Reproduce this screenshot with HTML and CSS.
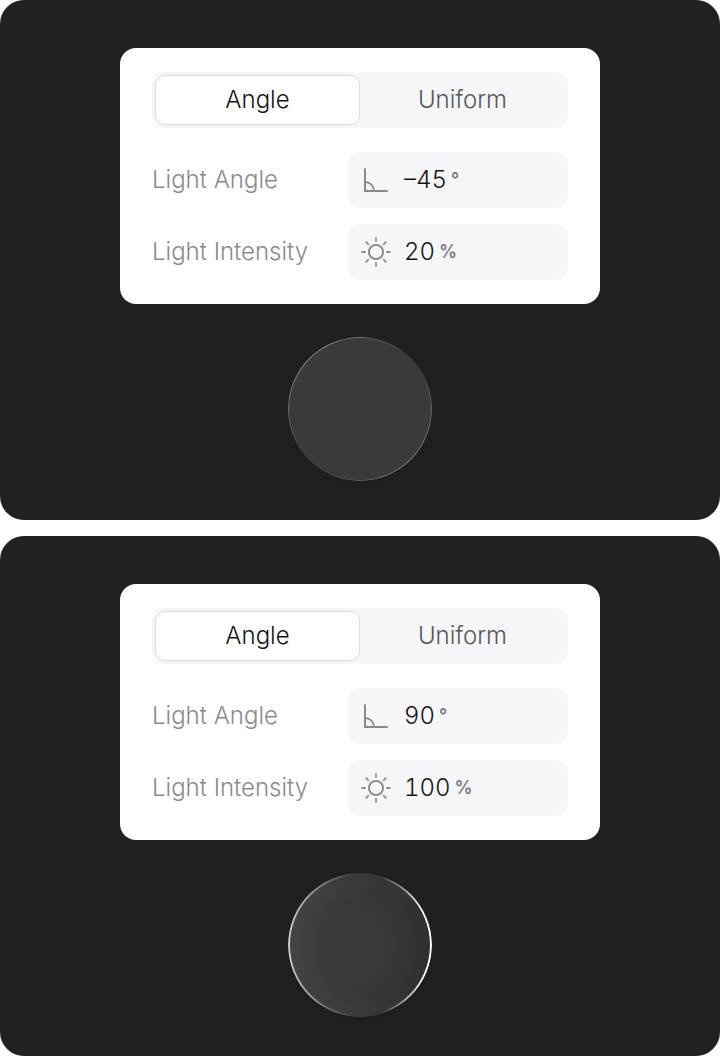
FILE: index.html
```html
<!doctype html>
<html lang="en">
  <head>
    <meta charset="utf-8">
    <title>Light settings</title>
    <meta name="viewport" content="width=device-width, initial-scale=1">
    <link rel="stylesheet" href="styles.css">
  </head>
  <body>
    <!-- shared icons -->
    <svg class="sprite" width="0" height="0" aria-hidden="true">
      <symbol id="icon-angle" viewBox="0 0 32 32">
        <path d="M5 5V27H27" stroke-width="2"/>
        <path d="M5 18A9 9 0 0 1 14 27" stroke-width="1.9"/>
      </symbol>
      <symbol id="icon-sun" viewBox="0 0 32 32">
        <circle cx="16" cy="16" r="7.1" stroke-width="1.9"/>
        <path d="M16 2.2V5M16 27V29.8M2.2 16H5M27 16H29.8M6.2 6.2L8.2 8.2M23.8 23.8L25.8 25.8M6.2 25.8L8.2 23.8M23.8 8.2L25.8 6.2" stroke-width="1.8"/>
      </symbol>
    </svg>

    <section class="stage">
      <form class="panel">
        <div class="segmented">
          <input type="radio" name="mode" id="mode_angle_1" checked>
          <label for="mode_angle_1">Angle</label>
          <input type="radio" name="mode" id="mode_uniform_1">
          <label for="mode_uniform_1">Uniform</label>
        </div>
        <div class="rows">
          <div class="row">
            <label for="angle_1">Light Angle</label>
            <div class="field">
              <svg class="icon"><use href="#icon-angle"/></svg>
              <input type="text" id="angle_1" value="–45">
              <span class="unit">°</span>
            </div>
          </div>
          <div class="row">
            <label for="intensity_1">Light Intensity</label>
            <div class="field">
              <svg class="icon"><use href="#icon-sun"/></svg>
              <input type="text" id="intensity_1" value="20">
              <span class="unit">%</span>
            </div>
          </div>
        </div>
      </form>
      <div class="knob knob-soft"></div>
    </section>

    <section class="stage">
      <form class="panel">
        <div class="segmented">
          <input type="radio" name="mode" id="mode_angle_2" checked>
          <label for="mode_angle_2">Angle</label>
          <input type="radio" name="mode" id="mode_uniform_2">
          <label for="mode_uniform_2">Uniform</label>
        </div>
        <div class="rows">
          <div class="row">
            <label for="angle_2">Light Angle</label>
            <div class="field">
              <svg class="icon"><use href="#icon-angle"/></svg>
              <input type="text" id="angle_2" value="90">
              <span class="unit">°</span>
            </div>
          </div>
          <div class="row">
            <label for="intensity_2">Light Intensity</label>
            <div class="field">
              <svg class="icon"><use href="#icon-sun"/></svg>
              <input type="text" id="intensity_2" value="100">
              <span class="unit">%</span>
            </div>
          </div>
        </div>
      </form>
      <div class="knob knob-bright"></div>
    </section>
  </body>
</html>
```
FILE: styles.css
```css
* {
  box-sizing: border-box;
}
body {
  margin: 0;
  display: flex;
  flex-direction: column;
  gap: 16px;
  background: #fff;
  font-family: Inter, "Liberation Sans", sans-serif;
  font-size: 24px;
  font-weight: 300;
  line-height: 32px;
}
.sprite {
  position: absolute;
}
.stage {
  display: flex;
  flex-direction: column;
  align-items: center;
  gap: 33px;
  padding: 48px 24px 39px;
  border-radius: 24px;
  background: #212121;
}

/* settings panel */
.panel {
  display: flex;
  flex-direction: column;
  gap: 24px;
  width: 100%;
  max-width: 480px;
  padding: 24px 32px;
  border-radius: 16px;
  background: #fff;
}
.segmented {
  display: flex;
  height: 56px;
  padding: 3px;
  border-radius: 12px;
  background: #f6f6f9;
}
.segmented input {
  appearance: none;
  width: 0;
  margin: 0;
}
.segmented label {
  flex: 1;
  display: flex;
  align-items: center;
  justify-content: center;
  border: 1px solid transparent;
  border-radius: 10px;
  color: #565659;
}
.segmented input:checked + label {
  border-color: #dcdcdf;
  background: #fff;
  color: #141416;
}
.rows {
  display: flex;
  flex-direction: column;
  gap: 16px;
}
.row {
  display: flex;
  align-items: center;
  justify-content: space-between;
}
.row label {
  color: #8a8a8e;
}
.field {
  display: flex;
  align-items: center;
  gap: 4px;
  width: 220px;
  height: 56px;
  padding: 0 12px;
  border-radius: 12px;
  background: #f6f6f9;
}
.field input {
  field-sizing: content;
  margin: 0;
  padding: 0;
  border: 0;
  outline: 0;
  background: none;
  color: #141416;
  font: inherit;
  font-variant-numeric: tabular-nums;
}
.icon {
  flex: none;
  width: 32px;
  height: 32px;
  margin-right: 8px;
  fill: none;
  stroke: #8a8a8e;
  stroke-linecap: round;
}
.unit {
  color: #7a7a7e;
  font-size: 18px;
  font-weight: 600;
}

/* lit knob, the rim is a masked gradient ring */
.knob {
  position: relative;
  width: 144px;
  height: 144px;
  border-radius: 50%;
  background: #393939;
}
.knob::before {
  content: '';
  position: absolute;
  inset: 0;
  padding: 1px;
  border-radius: 50%;
  mask: linear-gradient(#000 0 0) content-box exclude, linear-gradient(#000 0 0);
}
.knob-soft {
  box-shadow: 0 8px 16px rgba(0, 0, 0, 0.08), inset 8px 8px 24px rgba(255, 255, 255, 0.02), inset -8px -8px 24px rgba(255, 255, 255, 0.02);
}
.knob-soft::before {
  background: linear-gradient(135deg, #8a8a8a 15%, #3a3a3a 45%, #3a3a3a 55%, #787878 85%);
}
.knob-bright {
  box-shadow: 0 8px 16px rgba(0, 0, 0, 0.08), inset 16px 0 32px rgba(255, 255, 255, 0.08), inset -16px 0 32px rgba(0, 0, 0, 0.2);
}
.knob-bright::before {
  padding: 2px;
  background: linear-gradient(90deg, #ccc, #383838 45%, #383838 65%, #fff 95%);
}
```
